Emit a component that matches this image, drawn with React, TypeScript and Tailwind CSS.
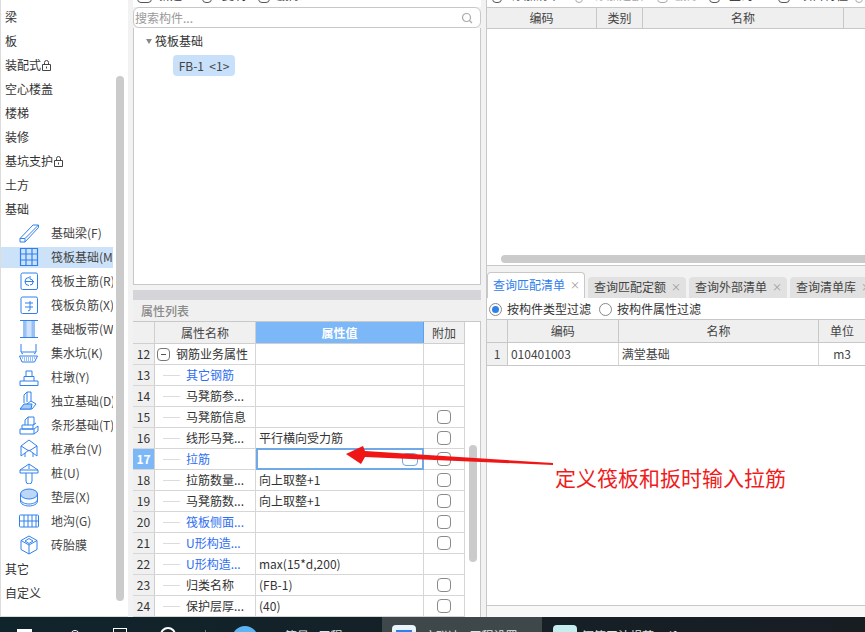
const blue = "#2f80ed";

const Ico = ({ children }: { children: React.ReactNode }) => (
  <svg width="22" height="22" viewBox="0 0 22 22" fill="none" stroke={blue} strokeWidth="1">
    {children}
  </svg>
);

const icons: Record<string, React.ReactNode> = {
  beam: (
    <Ico>
      <path d="M2 16.5 15 3h5.5v2.5L7 20H2z M2 16.5h5V20 M7 16.5 20.5 3" />
    </Ico>
  ),
  raft: (
    <Ico>
      <path d="M2.5 2.5h17v17h-17z M2.5 8h17 M2.5 14h17 M8 2.5v17 M14 2.5v17" strokeWidth="1.2" />
    </Ico>
  ),
  main: (
    <Ico>
      <rect x="3" y="3" width="16.5" height="16.5" rx="1.5" />
      <path d="M7 11.5h9 M11 7.5a4 4 0 1 0 0 8 M12 6v3a3 3 0 0 1 3 3 3 3 0 0 1-3 3" />
    </Ico>
  ),
  neg: (
    <Ico>
      <rect x="3" y="3" width="16.5" height="16.5" rx="1.5" />
      <path d="M7 9h8 M7 13h8 M12 7v9l-2 1" />
    </Ico>
  ),
  strip: (
    <Ico>
      <path d="M2 2.5h18 M2 19.5h18 M6 2.5v17 M8 2.5v17 M14 2.5v17 M16 2.5v17" />
      <path d="M8.5 3h5v16h-5z" fill="#cfe2fb" stroke="none" />
    </Ico>
  ),
  pit: (
    <Ico>
      <path d="M3 2v8h15V2 M3 10.5 5 12 M18 10.5 16 12 M1.5 14h18l-3 6H4z" />
      <path d="M4 16h13 M6 18h9" strokeDasharray="1 1" />
    </Ico>
  ),
  pier: (
    <Ico>
      <path d="M2 19.5h18v-4.5H2z M6 15v-4.5h10V15 M8 10.5V5h6v5.5" />
    </Ico>
  ),
  single: (
    <Ico>
      <path d="M6 13V5l3-3h4v9" />
      <path d="M9 2v10 M13 11l5 3-4 5H2z" />
      <path d="M2 19l4-5h8l-1 5z" fill="#a9cdf8" />
    </Ico>
  ),
  stripf: (
    <Ico>
      <path d="M7 11V6l3-3h6v8 M10 3v8" />
      <path d="M4 11h11v4H4z M2 15h14v5H2z M16 15l4-3v5l-4 3 M15 11l3-2" />
    </Ico>
  ),
  cap: (
    <Ico>
      <path d="M11 2 3 8v10l8-6 8 6V8z M3 8l8 5 8-5 M7 15v4 M15 15v4" />
    </Ico>
  ),
  pile: (
    <Ico>
      <path d="M2 8 11 2l9 6v3H2z M8 11v8a3 3 0 0 0 6 0v-8 M11 2v5 M2 8h18" />
    </Ico>
  ),
  pad: (
    <Ico>
      <ellipse cx="11" cy="8" rx="8.5" ry="5" fill="#bcd7f8" />
      <path d="M2.5 8v7c0 3 4 5 8.5 5s8.5-2 8.5-5V8 M2.5 13c0 3 4 5 8.5 5s8.5-2 8.5-5" />
    </Ico>
  ),
  ditch: (
    <Ico>
      <rect x="1.5" y="5" width="19" height="12" rx="1" />
      <path d="M1.5 11h19 M6 5v12 M10 5v12 M14 5v12 M18 5v12" />
    </Ico>
  ),
  brick: (
    <Ico>
      <path d="M11 2 3 6.5v9L11 20l8-4.5v-9z M3 6.5l8 4.5 8-4.5 M11 11v9 M7 7l4-2.5L15 7l-4 2.5z" />
    </Ico>
  ),
};

const Lock = () => (
  <svg width="9" height="11" viewBox="0 0 9 11" fill="none" stroke="#444" strokeWidth="1" className="ml-px">
    <path d="M.5 4.5h8v6h-8z M2.5 4.5V2.5a2 2 0 0 1 4 0v2" />
    <path d="M4.5 6.5v2" />
  </svg>
);

const navTop = ["梁", "板", "装配式", "空心楼盖", "楼梯", "装修", "基坑支护", "土方", "基础"];
const navSub = [
  ["beam", "基础梁(F)"],
  ["raft", "筏板基础(M)"],
  ["main", "筏板主筋(R)"],
  ["neg", "筏板负筋(X)"],
  ["strip", "基础板带(W)"],
  ["pit", "集水坑(K)"],
  ["pier", "柱墩(Y)"],
  ["single", "独立基础(D)"],
  ["stripf", "条形基础(T)"],
  ["cap", "桩承台(V)"],
  ["pile", "桩(U)"],
  ["pad", "垫层(X)"],
  ["ditch", "地沟(G)"],
  ["brick", "砖胎膜"],
];

const Sidebar = () => (
  <aside className="w-[128px] h-full shrink-0 bg-white border-l border-[#dcdcdc] border-b flex overflow-hidden">
    <div className="w-[112px] pt-[5px] shrink-0 overflow-hidden">
      {navTop.map((t) => (
        <div key={t} className="h-6 pl-1 flex items-center text-[#333]">
          {t}
          {(t === "装配式" || t === "基坑支护") && <Lock />}
        </div>
      ))}
      {navSub.map(([k, t]) => (
        <div key={k} className="h-6 flex items-center">
          <div
            className={`h-[21px] w-full pl-[17px] flex items-center whitespace-nowrap text-[#444] ${
              k === "raft" ? "bg-[#cce2f9]" : ""
            }`}
          >
            <span className="w-[22px] mr-[11px] shrink-0 flex">{icons[k]}</span>
            {t}
          </div>
        </div>
      ))}
      <div className="h-6 pl-1 flex items-center text-[#333]">其它</div>
      <div className="h-6 pl-1 flex items-center text-[#333]">自定义</div>
    </div>
    <div className="ml-[3px] mt-[76px] w-[8px] h-[525px] rounded bg-[#cbcbcb]" />
  </aside>
);

const rows: [string, string, string, boolean, boolean][] = [
  ["13", "其它钢筋", "", true, false],
  ["14", "马凳筋参...", "", false, false],
  ["15", "马凳筋信息", "", false, true],
  ["16", "线形马凳...", "平行横向受力筋", false, true],
  ["17", "拉筋", "", true, true],
  ["18", "拉筋数量...", "向上取整+1", false, true],
  ["19", "马凳筋数...", "向上取整+1", false, true],
  ["20", "筏板侧面...", "", true, true],
  ["21", "U形构造...", "", true, true],
  ["22", "U形构造...", "max(15*d,200)", true, false],
  ["23", "归类名称", "(FB-1)", false, true],
  ["24", "保护层厚...", "(40)", false, true],
];

const Check = () => <span className="block w-[14px] h-[14px] rounded-sm border border-[#8a8a8a] bg-white" />;

const PropTable = () => (
  <div className="flex-1 min-h-0 flex bg-white overflow-hidden border-r border-[#c8c8c8]">
    <div className="w-[332px] shrink-0">
      <div className="h-[22px] flex border-b border-[#cfcfcf] bg-[#f0f0f0] text-[#444]">
        <div className="w-[22px] border-r border-[#cfcfcf]" />
        <div className="w-[101px] border-r border-[#cfcfcf] flex items-center justify-center">属性名称</div>
        <div className="w-[168px] border-r border-[#5aa3ee] bg-[#7cb8f7] text-white font-bold flex items-center justify-center">
          属性值
        </div>
        <div className="w-[41px] border-r border-[#cfcfcf] flex items-center justify-center">附加</div>
      </div>
      <div className="h-[21px] flex border-b border-[#d6d6d6] text-[#333]">
        <div className="w-[22px] border-r border-[#cfcfcf] bg-[#f0f0f0] flex items-center justify-center">12</div>
        <div className="w-[101px] border-r border-[#d6d6d6] flex items-center pl-[2px]">
          <span className="w-[13px] h-[13px] rounded-sm border border-[#777] flex items-center justify-center mr-[6px]">
            <span className="w-[5px] h-px bg-[#555]" />
          </span>
          钢筋业务属性
        </div>
        <div className="w-[168px] border-r border-[#d6d6d6]" />
        <div className="w-[41px] border-r border-[#d6d6d6]" />
      </div>
      {rows.map(([n, name, val, isBlue, chk]) => {
        const on = n === "17";
        return (
          <div key={n} className="h-[21px] flex border-b border-[#d6d6d6] text-[#333]">
            <div
              className={`w-[22px] border-r border-[#cfcfcf] flex items-center justify-center ${
                on ? "bg-[#7cb8f7] text-white font-bold" : "bg-[#f0f0f0]"
              }`}
            >
              {n}
            </div>
            <div className="w-[101px] border-r border-[#d6d6d6] flex items-center pl-2">
              <span className="w-[17px] h-px bg-[#dcdcdc] mr-[6px] shrink-0" />
              <span className={`whitespace-nowrap ${isBlue ? "text-[#2e6ff0]" : ""}`}>{name}</span>
            </div>
            <div
              className={`w-[168px] flex items-center pl-[3px] whitespace-nowrap ${
                on ? "border-2 border-[#6fa9e6] -mt-px h-[22px] justify-end pr-[4px]" : "border-r border-[#d6d6d6]"
              }`}
            >
              {on ? <span className="w-[16px] h-[13px] rounded-sm border border-[#6fa9e6]" /> : val}
            </div>
            <div className="w-[41px] border-r border-[#d6d6d6] flex items-center justify-center">
              {chk && <Check />}
            </div>
          </div>
        );
      })}
    </div>
    <div className="ml-[4px] mt-[123px] w-[8px] h-[117px] rounded bg-[#cbcbcb]" />
  </div>
);

const MidPanel = () => (
  <section className="w-[348px] h-full shrink-0 ml-[5px] flex flex-col">
    <div className="h-[7px] shrink-0 overflow-hidden bg-white">
      <div className="-mt-[13px] flex items-center h-4 pl-[4px] text-[#333]">
        <span className="w-[15px] h-[16px] rounded-sm border border-[#555]" />
        <span className="ml-[6px] w-[44px]">新建</span>
        <span className="w-[10px] h-[16px] rounded-sm border border-[#555]" />
        <span className="ml-[10px] w-[36px]">复制</span>
        <span className="w-[12px] h-[16px] rounded-sm border border-[#555]" />
        <span className="ml-[7px]">删除</span>
      </div>
    </div>
    <div className="h-[21px] shrink-0 border border-[#c8c8c8] bg-white rounded-md flex items-center justify-between pl-[1px] pr-[7px] text-[#999]">
      搜索构件...
      <svg width="12" height="12" viewBox="0 0 12 12" fill="none" stroke="#aaa" strokeWidth="1.2">
        <circle cx="5.5" cy="5.5" r="4" />
        <path d="M8.5 8.5 11 11" />
      </svg>
    </div>
    <div className="h-[257px] shrink-0 bg-white border border-t-0 border-[#c8c8c8] pt-[4px] pl-[12px] text-[#333]">
      <div className="h-[18px] flex items-center">
        <span className="w-0 h-0 border-x-[3.5px] border-x-transparent border-t-[5px] border-t-[#888] mr-[3px]" />
        筏板基础
      </div>
      <div className="mt-[5px] ml-[27px] w-[62px] h-[21px] rounded bg-[#c8e0fa] flex items-center justify-center text-[#444]">
        FB-1&nbsp; &lt;1&gt;
      </div>
    </div>
    <div className="h-[5px] shrink-0" />
    <div className="h-[10px] shrink-0 bg-[#d5d5d9]" />
    <div className="h-[22px] shrink-0 bg-[#f0f0f0] border-b border-[#c8c8c8] flex items-center pl-2 text-[#8a8a8a] font-medium">
      属性列表
    </div>
    <PropTable />
  </section>
);

const Radio = ({ on }: { on?: boolean }) => (
  <span className="w-[13px] h-[13px] rounded-full border border-[#888] bg-white flex items-center justify-center">
    {on && <span className="w-[7px] h-[7px] rounded-full bg-[#2f80ed]" />}
  </span>
);

const tabs = [
  ["查询匹配定额", "w-[98px]"],
  ["查询外部清单", "w-[98px]"],
  ["查询清单库", "w-[80px]"],
];

const RightPanel = () => (
  <section className="flex-1 min-w-0 ml-[5px] h-full flex flex-col border-l border-[#c8c8c8]">
    <div className="h-[7px] shrink-0 overflow-hidden bg-white">
      <div className="-mt-[13px] h-4 flex items-center whitespace-nowrap text-[#444] pl-[5px]">
        <span className="w-[10px] h-[16px] rounded-sm border border-[#555]" />
        <span className="ml-[10px] w-[63px]">添加清单</span>
        <span className="w-[8px] h-[16px] rounded-sm border border-[#aaa]" />
        <span className="ml-[12px] w-[62px] text-[#aaa]">添加定额</span>
        <span className="w-[11px] h-[16px] rounded-sm border border-[#aaa]" />
        <span className="ml-[7px] w-[34px] text-[#aaa]">删除</span>
        <span className="w-[11px] h-[16px] rounded-sm border border-[#555]" />
        <span className="ml-[9px] w-[49px] font-bold">查询</span>
        <span className="w-[12px] h-[16px] rounded-sm border border-[#555]" />
        <span className="ml-[10px] w-[55px]">项目特征</span>
        <span className="w-[8px] h-[16px] rounded-sm border border-[#aaa]" />
      </div>
    </div>
    <div className="h-[259px] shrink-0 bg-white border-y border-[#c8c8c8] flex flex-col">
      <div className="h-[21px] shrink-0 flex bg-[#efefef] border-b border-[#c8c8c8] text-[#444]">
        <div className="w-[110px] border-r border-[#c8c8c8] flex items-center justify-center">编码</div>
        <div className="w-[46px] border-r border-[#c8c8c8] flex items-center justify-center">类别</div>
        <div className="w-[201px] border-r border-[#c8c8c8] flex items-center justify-center">名称</div>
      </div>
      <div className="mt-auto mb-[2px] ml-[14px] h-[8px] rounded-l bg-[#cbcbcb]" />
    </div>
    <div className="h-[6px] shrink-0" />
    <div className="h-[26px] shrink-0 flex items-end whitespace-nowrap overflow-hidden">
      <div className="h-[26px] w-[98px] shrink-0 rounded-t bg-white border border-b-0 border-[#c8c8c8] flex items-center pl-[5px] pb-[2px] text-[#2f80ed]">
        查询匹配清单
        <span className="ml-[5px] text-[#999] text-[10px]">×</span>
      </div>
      {tabs.map(([t, w]) => (
        <div key={t} className={`${w} h-[21px] ml-[3px] shrink-0 rounded-t bg-[#e1e1e1] flex items-center pl-[6px] pb-[2px] text-[#444]`}>
          {t}
          <span className="ml-[5px] text-[#999] text-[10px]">×</span>
        </div>
      ))}
    </div>
    <div className="flex-1 min-h-0 bg-white flex flex-col">
      <div className="h-[22px] shrink-0 border-b border-[#c8c8c8] flex items-center pl-[2px] pt-px text-[#333]">
        <Radio on />
        <span className="ml-[5px] w-[92px]">按构件类型过滤</span>
        <Radio />
        <span className="ml-[5px]">按构件属性过滤</span>
      </div>
      <div className="h-[23px] shrink-0 flex bg-[#efefef] border-b border-[#c8c8c8] text-[#444]">
        <div className="w-[21px] border-r border-[#c8c8c8]" />
        <div className="w-[111px] border-r border-[#c8c8c8] flex items-center justify-center">编码</div>
        <div className="w-[201px] border-r border-[#c8c8c8] flex items-center justify-center">名称</div>
        <div className="w-[46px] flex items-center justify-center">单位</div>
      </div>
      <div className="h-[23px] shrink-0 flex border-b border-[#c8c8c8] text-[#444]">
        <div className="w-[21px] border-r border-[#c8c8c8] bg-[#f0f0f0] flex items-center justify-center">1</div>
        <div className="w-[111px] border-r border-[#d6d6d6] flex items-center pl-[3px]">010401003</div>
        <div className="w-[201px] border-r border-[#d6d6d6] flex items-center pl-[3px]">满堂基础</div>
        <div className="w-[46px] flex items-center justify-center">m3</div>
      </div>
    </div>
    <div className="h-[12px] shrink-0 border-t border-[#c8c8c8] bg-[#f8f8f8]" />
  </section>
);

const Taskbar = () => (
  <footer className="h-[15px] shrink-0 flex overflow-hidden bg-gradient-to-r from-[#10242c] to-[#181d22] text-[#dfe6e8]">
    <span className="ml-[17px] mt-[12px] w-[15px] h-[10px] bg-white" />
    <span className="ml-[38px] mt-[13px] w-[10px] h-[10px] rounded-full border border-white" />
    <span className="ml-[33px] mt-[11px] w-[14px] h-[10px] border border-white" />
    <span className="ml-[33px] mt-[10px] w-[16px] h-[16px] rounded-full border-2 border-white" />
    <span className="ml-[29px] mt-[13px] w-px h-[6px] bg-[#777]" />
    <span className="ml-[26px] mt-[9px] w-[26px] h-[26px] rounded-full bg-[#5db4f2]" />
    <span className="ml-[7px] mt-[13px] w-[117px] whitespace-nowrap overflow-hidden">GTJ算量 - 工程</span>
    <div className="w-[160px] h-full bg-[#3e4749] flex pl-[10px]">
      <span className="mt-[8px] w-[24px] h-[20px] rounded bg-[#e9f4fb] flex justify-center">
        <span className="mt-[5px] w-[16px] h-[10px] bg-[#2f80ed]" />
      </span>
      <span className="ml-2 mt-[13px] whitespace-nowrap">广联达 - 工程设置</span>
    </div>
    <span className="ml-[11px] mt-[8px] w-[24px] h-[20px] rounded bg-[#c5ecef]" />
    <span className="ml-[5px] mt-[13px] whitespace-nowrap">钢筋平法规范.pdf</span>
  </footer>
);

export default function App() {
  return (
    <div className="relative w-[865px] h-[632px] overflow-hidden flex flex-col bg-[#f2f2f2] text-[12px] leading-none font-['Noto_Sans_CJK_SC','Noto_Sans',sans-serif]">
      <main className="flex-1 min-h-0 flex">
        <Sidebar />
        <MidPanel />
        <RightPanel />
      </main>
      <Taskbar />
      <svg className="absolute left-[340px] top-[440px]" width="220" height="30" viewBox="340 440 220 30">
        <path d="M346 454 363 446 365 451 553 463 553 465 365 457 361 464z" fill="#f01616" />
      </svg>
      <div className="absolute left-[555px] top-[466px] text-[21px] leading-[22px] text-[#f01c1c] whitespace-nowrap">
        定义筏板和扳时输入拉筋
      </div>
    </div>
  );
}
